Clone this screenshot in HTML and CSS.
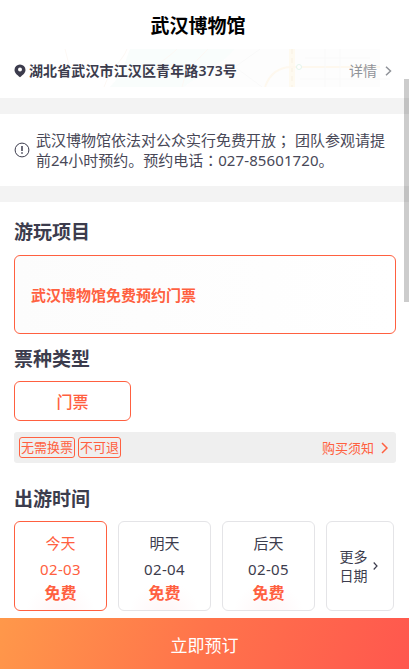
FILE: index.html
```html
<!DOCTYPE html>
<html lang="zh-CN">
<head>
    <meta charset="UTF-8">
    <meta name="viewport" content="width=device-width, initial-scale=1.0">
    <title>武汉博物馆</title>
    <link rel="stylesheet" href="styles.css">
</head>
<body>
    <div class="content">
        <h1 class="title">武汉博物馆</h1>

        <div class="address">
            <svg class="map" width="409" height="38" viewBox="0 0 409 38" fill="none">
                <path d="M130 0H235C222 16 205 22 184 38H110C124 24 125 12 130 0Z" fill="#f9fdfc"/>
                <path d="M235 0H380V38H184C205 22 222 16 235 0Z" fill="#fdfdfd"/>
                <path d="M127 0C122 13 111 18 104 38M177 0C165 12 158 12 153 25M208 0C198 11 186 18 182 38M65 0L70 20" stroke="#fdf8f4"/>
                <path d="M292 0V38" stroke="#fefaf0" stroke-width="6"/>
                <path d="M292 0V38" stroke="#f8f0e2" stroke-dasharray="5 4"/>
                <path d="M265 38C270 24 279 18 292 18H380" stroke="#fef8ee" stroke-width="2"/>
                <path d="M235 18L260 0M235 18L262 38M325 0V38M340 0V38M300 30H390M305 9H370" stroke="#f9f9f9"/>
                <circle cx="299" cy="18" r="2.5" fill="#fff" stroke="#e4f5ec"/>
            </svg>
            <svg class="pin" width="12" height="14" viewBox="0 0 12 14">
                <path d="M6 .5A5.5 5.5 0 0 0 .5 6C.5 9 3.2 11 6 13.3 8.8 11 11.500 9 11.500 6A5.500 5.500 0 0 0 6 .5Z" fill="#3c3c4d"/>
                <circle cx="6" cy="5.500" r="2" fill="#fff"/>
            </svg>
            <span class="address-text">湖北省武汉市江汉区青年路373号</span>
            <span class="detail">详情</span>
            <svg class="arrow" width="7" height="10" viewBox="0 0 7 10"><path d="M1 .8L5.500 5 1 9.200"/></svg>
        </div>

        <div class="notice">
            <svg class="info" width="16" height="16" viewBox="0 0 16 16" fill="none" stroke="#3c3c4d">
                <circle cx="8" cy="8" r="6.900"/>
                <path d="M8 4V9M8 10.200V11.700" stroke-width="1.500"/>
            </svg>
            <p class="notice-text">武汉博物馆依法对公众实行免费开放<span class="mark" lang="zh-TW">；</span> 团队参观请提<br>前24小时预约。预约电话<span class="mark" lang="zh-TW">：</span><span class="phone">027-85601720</span>。</p>
        </div>

        <div class="booking">
            <h2>游玩项目</h2>
            <div class="project">武汉博物馆免费预约门票</div>

            <h2>票种类型</h2>
            <div class="ticket">门票</div>
            <div class="rules">
                <span class="tag">无需换票</span>
                <span class="tag">不可退</span>
                <span class="know">购买须知</span>
                <svg class="arrow arrow-red" width="7" height="12" viewBox="0 0 7 12"><path d="M1 1L6 6 1 11"/></svg>
            </div>

            <h2>出游时间</h2>
            <div class="dates">
                <div class="date active"><span>今天</span><span class="day">02-03</span><b>免费</b></div>
                <div class="date"><span>明天</span><span class="day">02-04</span><b>免费</b></div>
                <div class="date"><span>后天</span><span class="day">02-05</span><b>免费</b></div>
                <div class="more">
                    <span>更多<br>日期</span>
                    <svg class="arrow arrow-dark" width="5" height="8" viewBox="0 0 5 8"><path d="M.7 .5L4 4 .7 7.500"/></svg>
                </div>
            </div>
        </div>
    </div>

    <div class="submit">立即预订</div>
    <div class="scrollbar"></div>
</body>
</html>
```
FILE: styles.css
```css
* { box-sizing: border-box; margin: 0; padding: 0; }
body { display: flex; flex-direction: column; position: relative; height: 669px; overflow: hidden; background: #fff; color: #3c3c4d; font-family: "Noto Sans", "Noto Sans CJK SC", sans-serif; font-size: 15px; }
svg { display: block; flex: none; }
.content { flex: 1; min-height: 0; overflow: hidden; }
.title { height: 49px; line-height: 50px; font-size: 19px; font-weight: 700; text-align: center; padding-right: 13px; color: #000; font-family: "Noto Sans CJK SC", sans-serif; }

.address { position: relative; display: flex; align-items: center; height: 49px; padding: 0 17px 5px 14px; font-size: 14px; }
.map { position: absolute; left: 0; top: 0; }
.pin, .address-text, .detail, .arrow { position: relative; }
.address-text { margin-left: 3px; font-weight: 600; line-height: 20px; letter-spacing: .12px; }
.detail { margin-left: auto; margin-right: 8px; color: #909399; line-height: 20px; }
.arrow { fill: none; stroke: #909399; stroke-width: 1.5; }
.arrow-red { stroke: #ff6040; }
.arrow-dark { stroke: #3c3c4d; stroke-width: 1.2; }

.notice { display: flex; align-items: center; height: 104px; padding: 0 14px; border-top: 16px solid #f3f3f3; border-bottom: 16px solid #f3f3f3; }
.notice-text { margin-left: 6px; line-height: 20px; white-space: nowrap; color: #484857; }
.mark { font-family: "Noto Sans CJK TC", sans-serif; line-height: 1; }
.phone { letter-spacing: .1px; }

.booking { padding: 16px 13px 0 14px; }
h2 { height: 28px; line-height: 28px; font-size: 19px; font-weight: 600; }
.project { display: flex; align-items: center; height: 79px; margin: 9px 0 11px; padding-left: 16px; border: 1px solid #ff6040; border-radius: 6px; background: linear-gradient(90deg, #fcfcfc, #fff); color: #ff6040; font-weight: 600; }
.ticket { width: 117px; height: 40px; margin-top: 8px; border: 1px solid #ff6040; border-radius: 6px; line-height: 38px; text-align: center; color: #ff6040; font-size: 16px; font-weight: 500; font-family: "Noto Sans CJK SC", sans-serif; }
.rules { display: flex; align-items: center; gap: 3px; height: 31px; margin: 11px 0 22px; padding: 0 8px 0 5px; border-radius: 3px; background: #efefef; color: #ff6040; font-size: 13px; }
.tag { height: 21px; padding: 0 1px; border: 1px solid #ff6040; border-radius: 3px; line-height: 19px; }
.know { margin-left: auto; margin-right: 4px; }

.dates { display: flex; gap: 11px; margin-top: 8px; }
.date { display: flex; flex-direction: column; width: 93px; height: 90px; padding-top: 8px; border: 1px solid #e4e4e7; border-radius: 6px; text-align: center; background: radial-gradient(circle at 50% 108%, #fff5f6, #fff 34%); }
.date span { height: 26px; line-height: 26px; }
.date .day { letter-spacing: .4px; }
.date b { line-height: 23px; font-size: 16px; font-weight: 600; color: #ff6040; }
.date.active { border-color: #ff6040; color: #ff6040; }
.more { display: flex; align-items: center; justify-content: center; gap: 5px; width: 68px; height: 90px; padding-right: 3px; border: 1px solid #e4e4e7; border-radius: 6px; line-height: 19px; font-size: 14px; }

.submit { height: 51px; line-height: 56px; text-align: center; color: #fff; font-size: 17px; background: linear-gradient(110deg, #ff984a, #ff734b 50%, #ff574e); }
.scrollbar { position: absolute; right: 0; top: 79px; width: 5px; height: 223px; background: rgba(0, 0, 0, .2); }
```
